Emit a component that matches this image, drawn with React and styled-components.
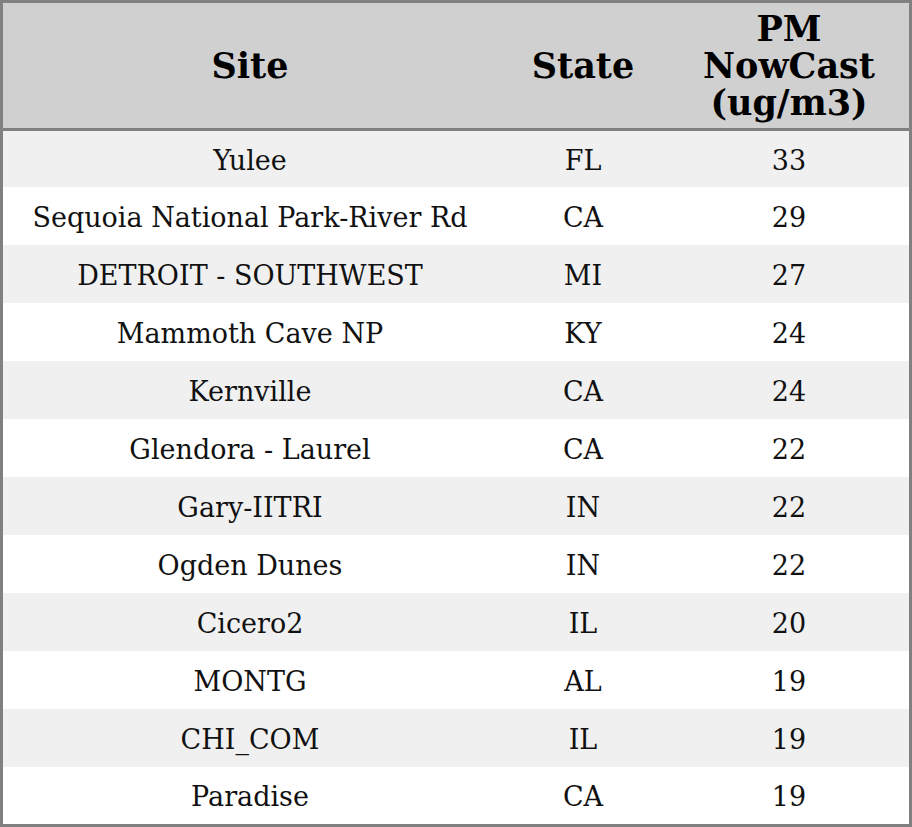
import React from "react";
import styled, { createGlobalStyle } from "styled-components";

const GlobalStyle = createGlobalStyle`
  body {
    margin: 0;
    background: #ffffff;
    font-family: "DejaVu Serif", serif;
  }
`;

const rows = [
  ["Yulee", "FL", 33],
  ["Sequoia National Park-River Rd", "CA", 29],
  ["DETROIT - SOUTHWEST", "MI", 27],
  ["Mammoth Cave NP", "KY", 24],
  ["Kernville", "CA", 24],
  ["Glendora - Laurel", "CA", 22],
  ["Gary-IITRI", "IN", 22],
  ["Ogden Dunes", "IN", 22],
  ["Cicero2", "IL", 20],
  ["MONTG", "AL", 19],
  ["CHI_COM", "IL", 19],
  ["Paradise", "CA", 19],
];

const Table = styled.div`
  width: 912px;
  height: 827px;
  box-sizing: border-box;
  border: 3px solid #808080;
  display: grid;
  grid-template-columns: 494px 172px 240px;
  grid-template-rows: 128px 56px repeat(10, 58px) 57px;
  color: #000000;
`;

const Head = styled.div`
  box-sizing: border-box;
  background: #d0d0d0;
  border-bottom: 3px solid #808080;
  display: flex;
  align-items: center;
  justify-content: center;
  text-align: center;
  font-weight: bold;
  font-size: 35px;
  line-height: 37px;
`;

const Cell = styled.div`
  box-sizing: border-box;
  background: ${(p) => (p.$odd ? "#f0f0f0" : "#ffffff")};
  display: flex;
  align-items: center;
  justify-content: center;
  padding-top: 2px;
  font-size: 27px;
  white-space: nowrap;
  color: #111111;
`;

export default function App() {
  return (
    <>
      <GlobalStyle />
      <Table>
        <Head>Site</Head>
        <Head>State</Head>
        <Head>
          PM
          <br />
          NowCast
          <br />
          (ug/m3)
        </Head>
        {rows.map(([site, state, value], i) => (
          <React.Fragment key={site}>
            <Cell $odd={i % 2 === 0}>{site}</Cell>
            <Cell $odd={i % 2 === 0}>{state}</Cell>
            <Cell $odd={i % 2 === 0}>{value}</Cell>
          </React.Fragment>
        ))}
      </Table>
    </>
  );
}
